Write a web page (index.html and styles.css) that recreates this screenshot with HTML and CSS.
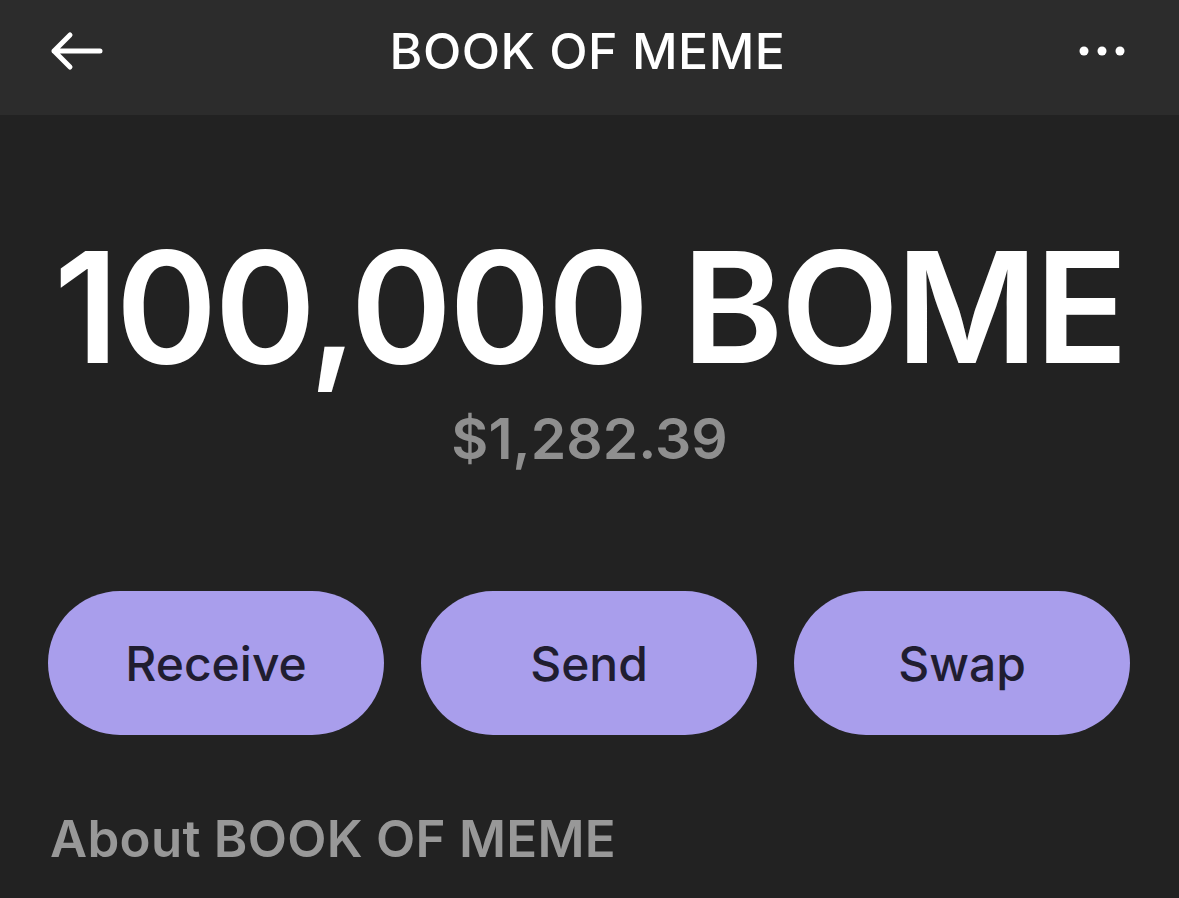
FILE: index.html
```html
<!DOCTYPE html>
<html>
<head>
<meta charset="utf-8">
<link rel="stylesheet" href="styles.css">
</head>
<body>
<div class="screen">
  <header class="topbar">
    <div class="icon-btn back">
      <svg width="54" height="40" viewBox="0 0 54 40"><path d="M4 20 H50 M20 4 L4 20 L20 36" fill="none" stroke="#fff" stroke-width="5" stroke-linecap="round" stroke-linejoin="round"/></svg>
    </div>
    <div class="title">BOOK OF MEME</div>
    <div class="icon-btn more">
      <svg width="46" height="10" viewBox="0 0 46 10"><circle cx="5" cy="5" r="4.5" fill="#fff"/><circle cx="23" cy="5" r="4.5" fill="#fff"/><circle cx="41" cy="5" r="4.5" fill="#fff"/></svg>
    </div>
  </header>
  <main class="content">
    <section class="balance">
      <div class="amount">100,000 BOME</div>
      <div class="fiat">$1,282.39</div>
    </section>
    <section class="actions">
      <button class="pill">Receive</button>
      <button class="pill">Send</button>
      <button class="pill">Swap</button>
    </section>
    <h2 class="about">About BOOK OF MEME</h2>
  </main>
</div>
</body>
</html>
```
FILE: styles.css
```css
* { box-sizing: border-box; }
html, body { margin: 0; padding: 0; background: #222222; }
body { font-family: Inter, "Noto Sans", sans-serif; width: 1179px; height: 898px; overflow: hidden; }
.screen { width: 1179px; height: 898px; display: flex; flex-direction: column; }
.topbar {
  flex-shrink: 0;
  height: 115px;
  background: #2c2c2c;
  display: flex;
  align-items: center;
  justify-content: space-between;
  padding: 0 54px 14px 50px;
}
.icon-btn { display: flex; align-items: center; width: 80px; }
.more { justify-content: flex-end; }
.title { color: #fff; font-size: 50px; font-weight: 500; letter-spacing: 0.5px; }
.content { padding: 0 48px; display: flex; flex-direction: column; }
.balance { display: flex; flex-direction: column; align-items: center; padding-top: 107px; }
.amount { color: #fff; font-size: 154px; font-weight: 600; line-height: 170px; letter-spacing: -3px; white-space: nowrap; }
.fiat { color: #8f8f8f; font-size: 57px; font-weight: 600; line-height: 70px; margin-top: 12px; }
.actions { display: flex; gap: 37px; margin-top: 117px; }
.pill {
  flex-shrink: 0;
  width: 336px; height: 144px; border: none; border-radius: 72px;
  background: #a99eec; color: #201d30;
  font-family: Inter, "Noto Sans", sans-serif; font-size: 48px; font-weight: 500;
}
.about { color: #989898; font-size: 51px; font-weight: 600; margin: 74px 0 0 2px; line-height: 60px; letter-spacing: 0.3px; }
```
